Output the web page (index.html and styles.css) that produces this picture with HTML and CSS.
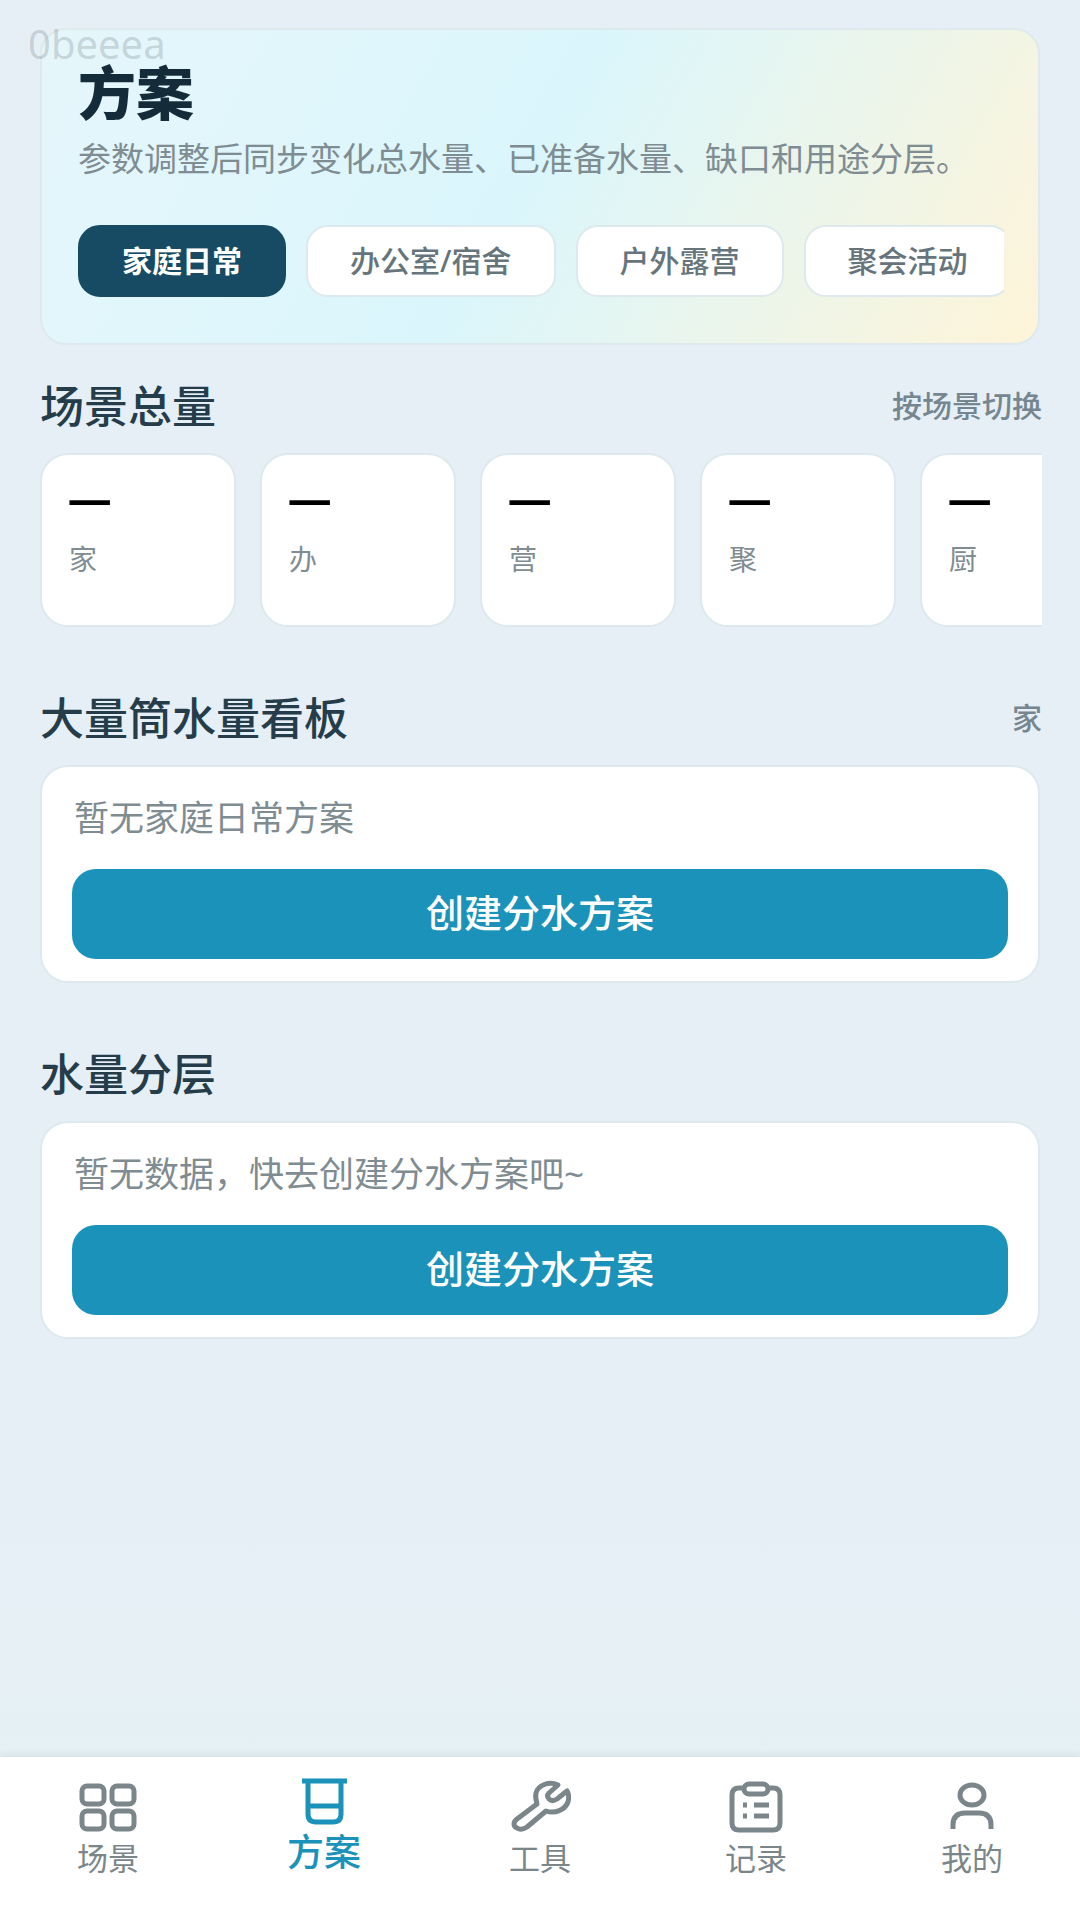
FILE: index.html
```html
<!DOCTYPE html>
<html lang="zh-CN">
<head>
    <meta charset="UTF-8" />
    <meta name="viewport" content="width=device-width, initial-scale=1.0" />
    <title>方案</title>
    <link rel="stylesheet" href="styles.css">
</head>
<body>
    <span class="device-tag">0beeea</span>

    <main>
        <!-- ========= Hero ========= -->
        <section class="hero">
            <h1>方案</h1>
            <p class="hero-desc">参数调整后同步变化总水量、已准备水量、缺口和用途分层。</p>
            <div class="chips">
                <button type="button" class="chip chip-active">家庭日常</button>
                <button type="button" class="chip">办公室/宿舍</button>
                <button type="button" class="chip">户外露营</button>
                <button type="button" class="chip">聚会活动</button>
            </div>
        </section>

        <!-- ========= 场景总量 ========= -->
        <section class="block">
            <div class="block-head">
                <h2>场景总量</h2>
                <span class="hint">按场景切换</span>
            </div>
            <div class="totals">
                <div class="total"><strong>—</strong><span>家</span></div>
                <div class="total"><strong>—</strong><span>办</span></div>
                <div class="total"><strong>—</strong><span>营</span></div>
                <div class="total"><strong>—</strong><span>聚</span></div>
                <div class="total"><strong>—</strong><span>厨</span></div>
            </div>
        </section>

        <!-- ========= 看板 ========= -->
        <section class="block">
            <div class="block-head">
                <h2>大量筒水量看板</h2>
                <span class="hint">家</span>
            </div>
            <div class="card">
                <p>暂无家庭日常方案</p>
                <button type="button" class="btn">创建分水方案</button>
            </div>
        </section>

        <!-- ========= 分层 ========= -->
        <section class="block">
            <div class="block-head">
                <h2>水量分层</h2>
            </div>
            <div class="card">
                <p>暂无数据，快去创建分水方案吧~</p>
                <button type="button" class="btn">创建分水方案</button>
            </div>
        </section>
    </main>

    <!-- ========= 底部导航 ========= -->
    <nav class="tabbar">
        <a href="#" class="tab">
            <svg width="60" height="52" viewBox="0 0 60 52">
                <rect x="4" y="5" width="22" height="18" rx="5"/>
                <rect x="34" y="5" width="22" height="18" rx="5"/>
                <rect x="4" y="30" width="22" height="18" rx="5"/>
                <rect x="34" y="30" width="22" height="18" rx="5"/>
            </svg>
            <span>场景</span>
        </a>
        <a href="#" class="tab tab-active">
            <svg width="60" height="52" viewBox="0 0 60 52">
                <path d="M8 6H53M14 6V39Q14 47 22 47H39Q47 47 47 39V6M14 31H47"/>
            </svg>
            <span>方案</span>
        </a>
        <a href="#" class="tab">
            <svg width="60" height="52" viewBox="0 0 60 52">
                <path d="M48 4C39 0 28 4 26 12C25 16 26 19 27 23L7 38C3 41 3 45 7 47C10 49 14 48 17 46L36 30C45 33 55 29 58 21C59 17 59 13 57 10L47 18C44 20 41 20 39 18C37 16 37 14 39 12Z"/>
            </svg>
            <span>工具</span>
        </a>
        <a href="#" class="tab">
            <svg width="60" height="52" viewBox="0 0 60 52">
                <path d="M18 7H13Q6 7 6 14V42Q6 49 13 49H47Q54 49 54 42V14Q54 7 47 7H42"/>
                <rect x="18" y="3" width="24" height="10" rx="5"/>
                <path d="M17 24H21M28 24H43M17 35H21M28 35H43"/>
            </svg>
            <span>记录</span>
        </a>
        <a href="#" class="tab">
            <svg width="60" height="52" viewBox="0 0 60 52">
                <ellipse cx="30" cy="14" rx="12" ry="10"/>
                <path d="M11 48V44Q11 32 23 32H37Q49 32 49 44V48"/>
            </svg>
            <span>我的</span>
        </a>
    </nav>
</body>
</html>
```
FILE: styles.css
```css
:root {
    --bg: #e6eff6;
    --bg-end: #e4f1f2;
    --line: #dde9ec;
    --ink: #142c3a;
    --title: #253d4a;
    --muted: #7f8c92;
    --brand: #1b92b9;
    --brand-dark: #164b63;
}

* {
    box-sizing: border-box;
}

body {
    margin: 0;
    min-height: 100vh;
    display: flex;
    flex-direction: column;
    font-family: "Noto Sans", "Noto Sans CJK SC", sans-serif;
    color: var(--ink);
    background: linear-gradient(var(--bg) 80%, var(--bg-end));
}

main {
    flex: 1;
    padding: 28px 38px 28px 40px;
}

h1, h2, p {
    margin: 0;
}

button {
    font-family: inherit;
    border: none;
    cursor: pointer;
}

.device-tag {
    position: absolute;
    top: 24px;
    left: 28px;
    font-size: 40px;
    line-height: 40px;
    color: rgba(90, 100, 105, 0.24);
}

/* ====== Hero ====== */
.hero {
    margin-right: 2px;
    padding: 32px 34px 46px 36px;
    border: 2px solid var(--line);
    border-radius: 26px;
    background: linear-gradient(120deg, #e6f6fb 0%, #daf6fc 48%, #fef4d8 100%);
}
h1 {
    font-size: 58px;
    line-height: 62px;
    font-weight: 900;
}
.hero-desc {
    margin-top: 12px;
    font-size: 33px;
    line-height: 46px;
    color: var(--muted);
    white-space: nowrap;
}

.chips {
    display: flex;
    gap: 20px;
    margin-top: 43px;
    overflow: hidden;
}
.chip {
    flex: none;
    height: 72px;
    padding: 0 42px 4px;
    border: 2px solid var(--line);
    border-radius: 22px;
    background: #fff;
    color: #66757c;
    font-size: 30px;
    font-weight: 500;
}
.chip-active {
    border-color: var(--brand-dark);
    background: var(--brand-dark);
    color: #fff;
    font-weight: 700;
}

/* ====== Bloques ====== */
.block {
    margin-top: 32px;
}
.block + .block {
    margin-top: 62px;
}
.block-head {
    display: flex;
    align-items: center;
    justify-content: space-between;
    height: 54px;
    margin-bottom: 22px;
}
h2 {
    font-size: 44px;
    font-weight: 500;
    color: var(--title);
}
.hint {
    font-size: 30px;
    font-weight: 500;
    color: #758690;
}

.totals {
    display: flex;
    gap: 24px;
    overflow: hidden;
}
.total {
    flex: none;
    display: flex;
    flex-direction: column;
    width: 196px;
    height: 174px;
    padding: 12px 27px;
    border: 2px solid var(--line);
    border-radius: 28px;
    background: #fff;
}
.total strong {
    margin-left: -2px;
    font-family: "Noto Sans CJK SC", sans-serif;
    font-size: 50px;
    line-height: 56px;
    color: #000;
}
.total span {
    margin-top: 16px;
    font-size: 28px;
    line-height: 40px;
    color: var(--muted);
}

.card {
    margin-right: 2px;
    padding: 26px 30px 22px;
    border: 2px solid var(--line);
    border-radius: 28px;
    background: #fff;
}
.card p {
    padding-left: 2px;
    font-size: 35px;
    line-height: 50px;
    color: var(--muted);
}
.btn {
    width: 100%;
    height: 90px;
    margin-top: 26px;
    padding-bottom: 8px;
    border-radius: 24px;
    background: var(--brand);
    color: #fff;
    font-size: 38px;
    font-weight: 500;
}
.card + .card {
    margin-top: 24px;
}

/* ====== Tabbar ====== */
.tabbar {
    display: flex;
    height: 163px;
    padding-top: 24px;
    background: #fff;
    box-shadow: 0 -2px 6px rgba(120, 130, 160, 0.16);
}
.tab {
    flex: 1;
    display: flex;
    flex-direction: column;
    align-items: center;
    gap: 5px;
    color: #7b868b;
    font-size: 31px;
    line-height: 40px;
    text-decoration: none;
}
.tab svg {
    fill: none;
    stroke: currentColor;
    stroke-width: 5;
    stroke-linejoin: round;
    overflow: visible;
}
.tab-active {
    margin-top: -6px;
    gap: 2px;
    color: var(--brand);
    font-size: 37px;
    line-height: 46px;
    font-weight: 500;
}
```
